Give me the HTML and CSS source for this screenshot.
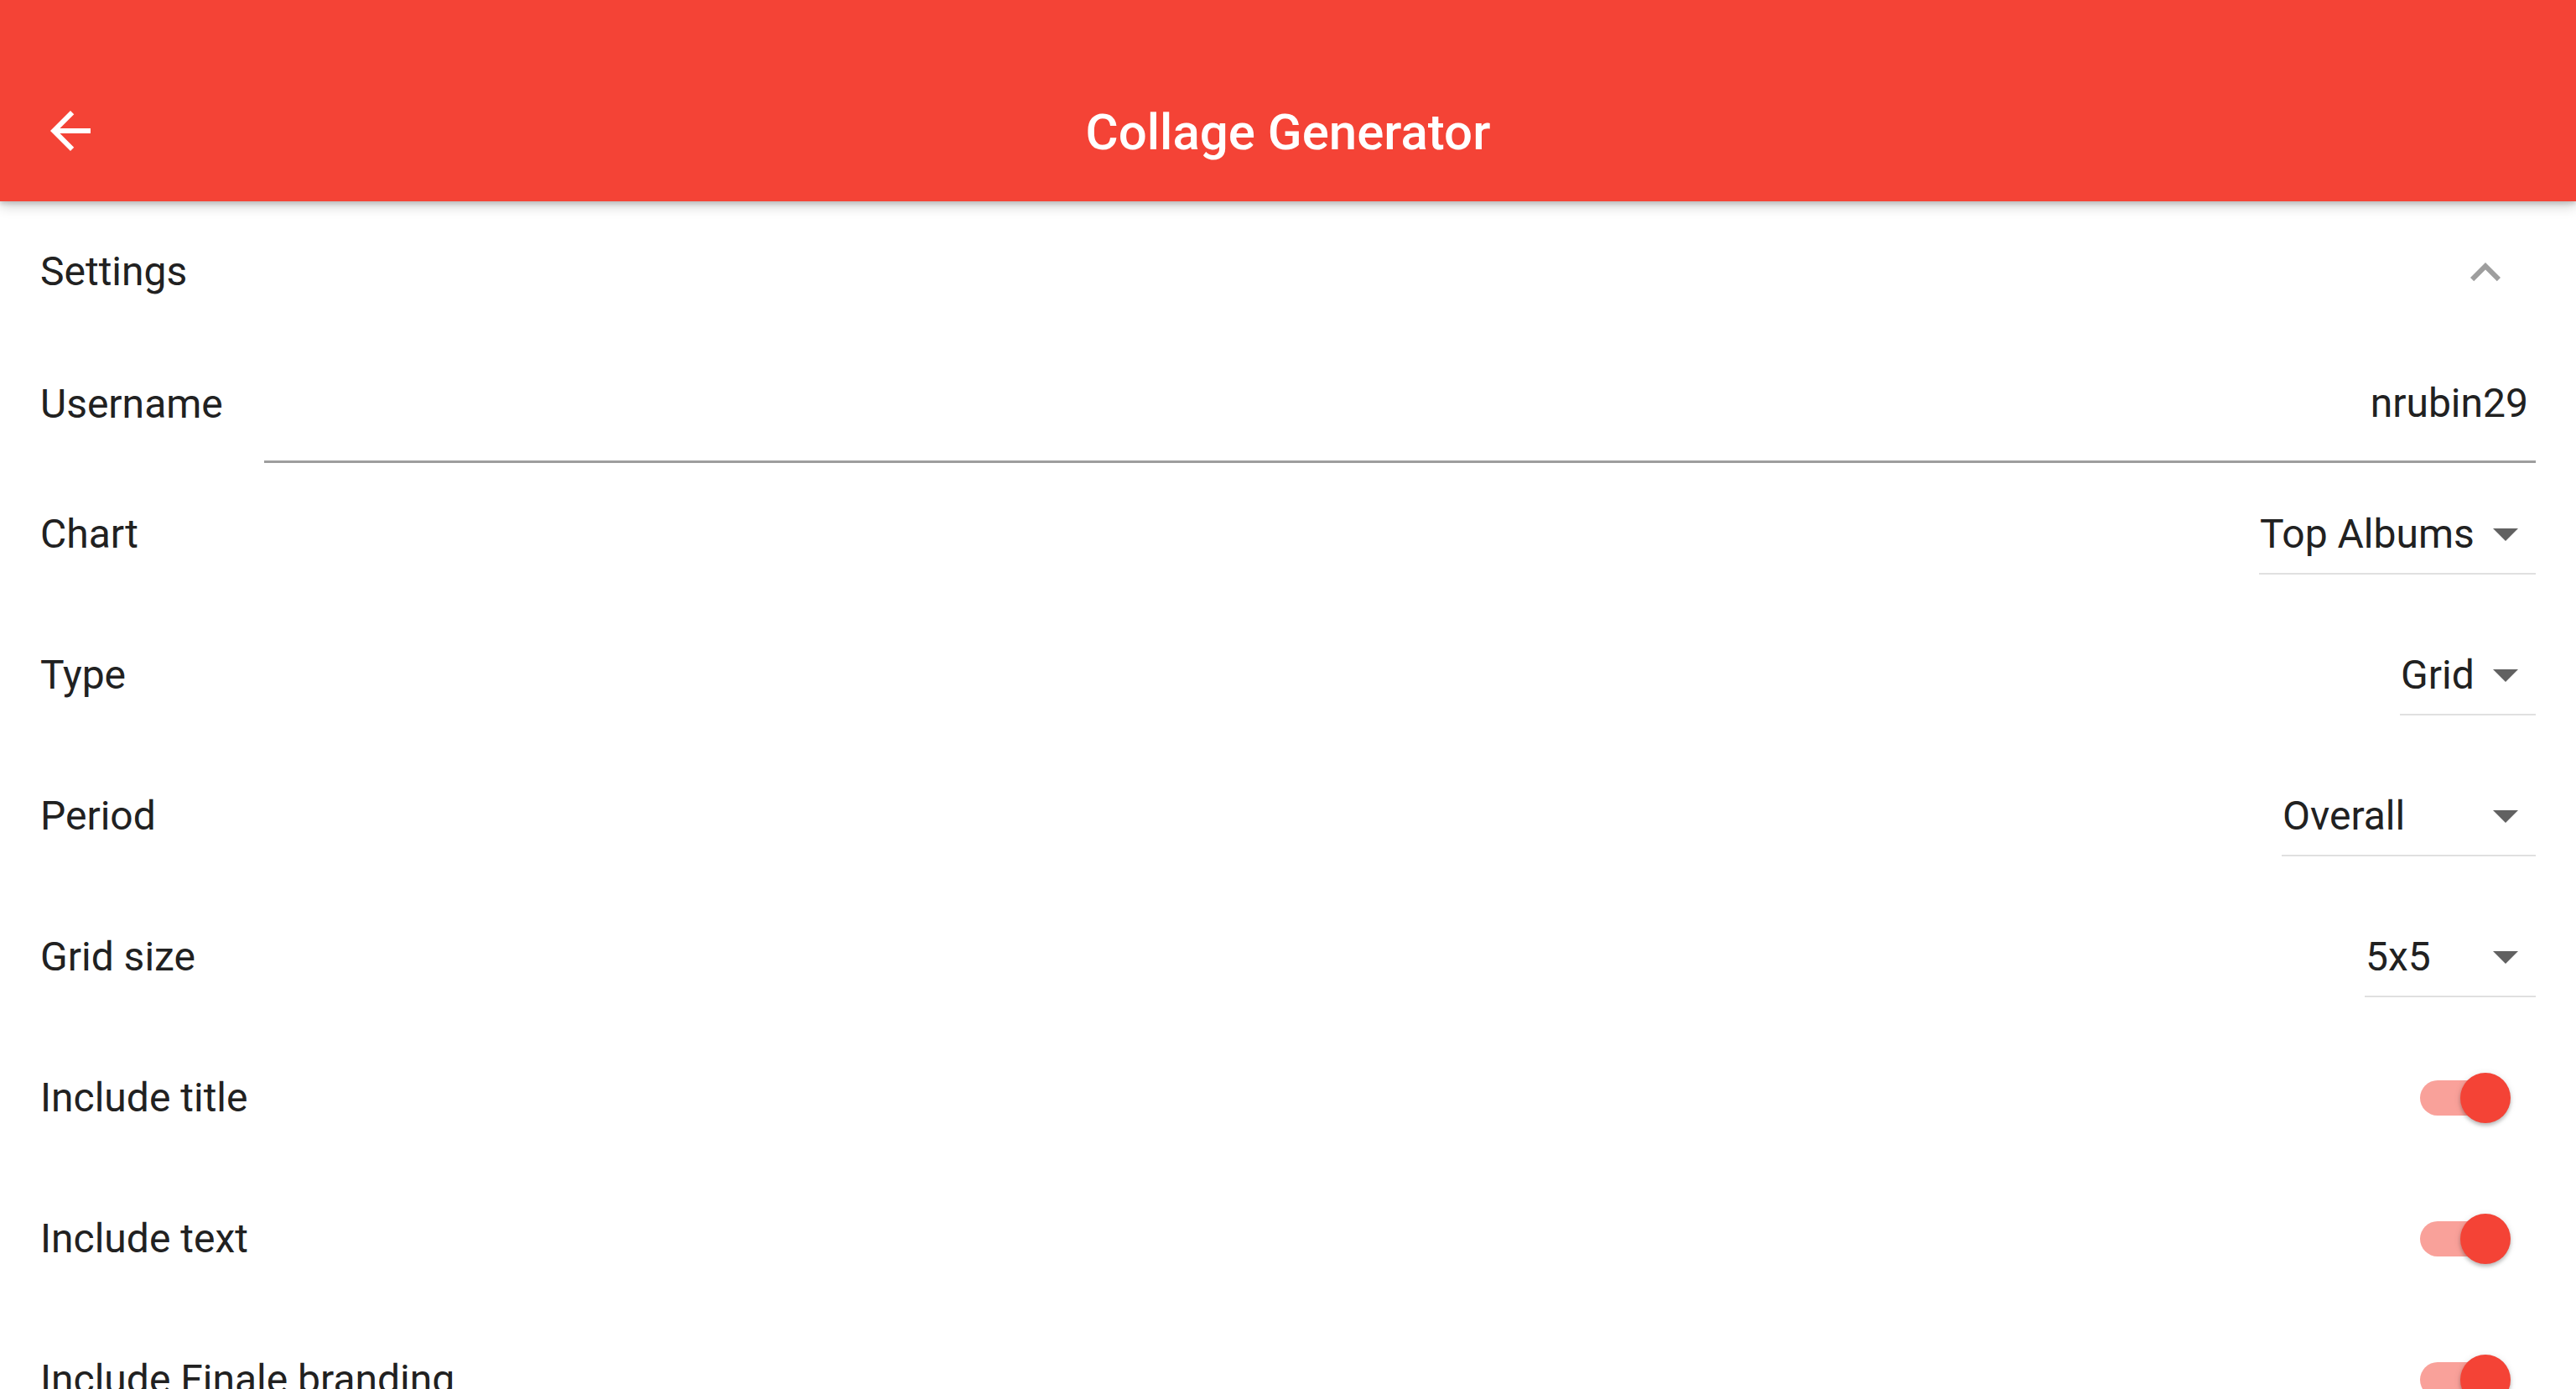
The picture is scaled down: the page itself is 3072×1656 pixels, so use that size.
FILE: index.html
```html
<!DOCTYPE html>
<html lang="en">
<head>
<meta charset="utf-8">
<title>Collage Generator</title>
<link rel="stylesheet" href="styles.css">
</head>
<body>
<div class="screen">
  <header class="appbar">
    <div class="toolbar">
      <div class="lead">
        <svg class="icon72" viewBox="0 0 24 24"><path fill="#ffffff" d="M20 11H7.83l5.59-5.59L12 4l-8 8 8 8 1.41-1.41L7.83 13H20v-2z"/></svg>
      </div>
      <h1 class="title">Collage Generator</h1>
      <div class="trail"></div>
    </div>
  </header>

  <main class="content">
    <div class="row section-head">
      <span class="label">Settings</span>
      <svg class="icon72 chevron" viewBox="0 0 24 24"><path fill="#9e9e9e" d="M12 8l-6 6 1.41 1.41L12 10.83l4.59 4.58L18 14z"/></svg>
    </div>

    <div class="row username-row">
      <span class="label field-label">Username</span>
      <div class="text-field">nrubin29</div>
    </div>

    <div class="row">
      <span class="label">Chart</span>
      <div class="dropdown dd-chart">
        <span class="dd-value">Top Albums</span>
        <svg class="icon72" viewBox="0 0 24 24"><path fill="#616161" d="M7 10l5 5 5-5z"/></svg>
      </div>
    </div>

    <div class="row">
      <span class="label">Type</span>
      <div class="dropdown dd-type">
        <span class="dd-value">Grid</span>
        <svg class="icon72" viewBox="0 0 24 24"><path fill="#616161" d="M7 10l5 5 5-5z"/></svg>
      </div>
    </div>

    <div class="row">
      <span class="label">Period</span>
      <div class="dropdown dd-period">
        <span class="dd-value">Overall</span>
        <svg class="icon72" viewBox="0 0 24 24"><path fill="#616161" d="M7 10l5 5 5-5z"/></svg>
      </div>
    </div>

    <div class="row">
      <span class="label">Grid size</span>
      <div class="dropdown dd-grid">
        <span class="dd-value">5x5</span>
        <svg class="icon72" viewBox="0 0 24 24"><path fill="#616161" d="M7 10l5 5 5-5z"/></svg>
      </div>
    </div>

    <div class="row">
      <span class="label">Include title</span>
      <div class="switch"><div class="track"></div><div class="thumb"></div></div>
    </div>

    <div class="row">
      <span class="label">Include text</span>
      <div class="switch"><div class="track"></div><div class="thumb"></div></div>
    </div>

    <div class="row">
      <span class="label">Include Finale branding</span>
      <div class="switch"><div class="track"></div><div class="thumb"></div></div>
    </div>
  </main>
</div>
</body>
</html>
```

FILE: styles.css
```css
* { box-sizing: border-box; }

html, body {
  margin: 0;
  padding: 0;
  background: #ffffff;
}

body {
  font-family: Roboto, "Noto Sans", "Liberation Sans", sans-serif;
  color: #212121;
  width: 3072px;
  height: 1656px;
  overflow: hidden;
}

.screen {
  width: 3072px;
  height: 1656px;
  overflow: hidden;
  display: flex;
  flex-direction: column;
}

.appbar {
  height: 240px;
  flex: none;
  background: #f44336;
  padding-top: 72px;
  position: relative;
  z-index: 2;
  box-shadow: 0 6px 14px rgba(0, 0, 0, 0.18), 0 3px 5px rgba(0, 0, 0, 0.14);
}

.toolbar {
  height: 168px;
  display: grid;
  grid-template-columns: 1fr auto 1fr;
  align-items: center;
  padding: 0 48px;
}

.lead {
  display: flex;
  align-items: center;
}

.icon72 {
  width: 72px;
  height: 72px;
  display: block;
  flex: none;
}

.title {
  margin: 0;
  padding-top: 4px;
  font-size: 60px;
  font-weight: 500;
  color: #ffffff;
  line-height: 72px;
  letter-spacing: 0;
}

.content {
  flex: 1;
  display: flex;
  flex-direction: column;
}

.row {
  height: 168px;
  flex: none;
  display: flex;
  align-items: center;
  justify-content: space-between;
  padding: 0 48px;
}

.label {
  font-size: 48px;
  line-height: 56px;
  color: #212121;
  white-space: nowrap;
}

.section-head .chevron {
  margin-right: 24px;
  margin-top: 2px;
}

.username-row {
  height: 145px;
  align-items: stretch;
}

.field-label {
  align-self: center;
  margin-top: 2px;
  width: 267px;
  flex: none;
}

.text-field {
  flex: 1;
  display: flex;
  align-items: center;
  justify-content: flex-end;
  padding-top: 4px;
  padding-right: 9px;
  font-size: 48px;
  color: #212121;
  border-bottom: 3px solid #9e9e9e;
  margin-bottom: 1px;
}

.dropdown {
  height: 96px;
  margin-top: 0;
  display: flex;
  align-items: center;
  border-bottom: 2px solid #e0e0e0;
  flex: none;
}

.dd-value {
  flex: 1;
  font-size: 48px;
  color: #212121;
  padding-left: 1px;
  white-space: nowrap;
}

.dropdown .icon72 {
  margin-top: 0;
}

.dd-chart { width: 330px; }
.dd-type { width: 162px; }
.dd-period { width: 303px; }
.dd-grid { width: 204px; }

.switch {
  position: relative;
  width: 108px;
  height: 60px;
  margin-right: 30px;
  flex: none;
}

.track {
  width: 99px;
  height: 42px;
  margin-top: 9px;
  border-radius: 21px;
  background: #f9a19a;
}

.thumb {
  position: absolute;
  right: 0;
  top: 0;
  width: 60px;
  height: 60px;
  border-radius: 50%;
  background: #f44336;
  box-shadow: 0 3px 4px rgba(0, 0, 0, 0.22), 0 1px 8px rgba(0, 0, 0, 0.1);
}
```
